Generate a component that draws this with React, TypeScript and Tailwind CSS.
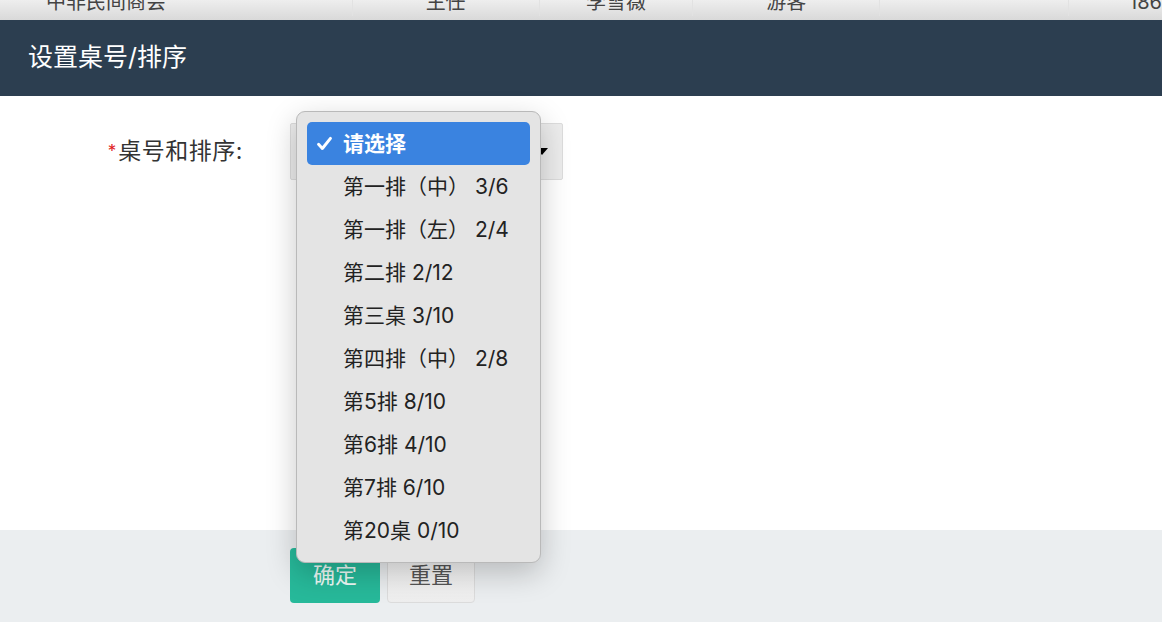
import { useState } from "react";

const options = [
  "请选择",
  "第一排（中） 3/6",
  "第一排（左） 2/4",
  "第二排 2/12",
  "第三桌 3/10",
  "第四排（中） 2/8",
  "第5排 8/10",
  "第6排 4/10",
  "第7排 6/10",
  "第20桌 0/10",
];

function CheckIcon() {
  return (
    <svg className="h-[17px] w-[17px]" viewBox="0 0 16 16" fill="none">
      <path
        d="M2.4 8.8l3.6 3.9L13.6 3.2"
        stroke="currentColor"
        strokeWidth={2.8}
        strokeLinecap="round"
        strokeLinejoin="round"
      />
    </svg>
  );
}

function App() {
  const [selected, setSelected] = useState(0);

  return (
    <div className="flex h-screen w-full flex-col overflow-hidden bg-white font-['Inter','Noto_Sans_CJK_SC',sans-serif]">
      {/* table row behind the dialog */}
      <div className="flex h-[20px] shrink-0 overflow-hidden bg-gradient-to-b from-[#eeeeee] to-[#d9d9d9] text-[20px] text-[#444]">
        <div className="-mt-[12px] h-[28px] w-[352px] pl-[46px] leading-[28px]">中非民间商会</div>
        <div className="-mt-[12px] h-[28px] w-[187px] border-l border-[#e2e2e2] text-center leading-[28px]">主任</div>
        <div className="-mt-[12px] h-[28px] w-[154px] border-l border-[#e2e2e2] text-center leading-[28px]">李雪薇</div>
        <div className="-mt-[12px] h-[28px] w-[187px] border-l border-[#e2e2e2] text-center leading-[28px]">游客</div>
        <div className="-mt-[12px] h-[28px] w-[189px] border-l border-[#e2e2e2] leading-[28px]"></div>
        <div className="-mt-[12px] h-[28px] flex-1 border-l border-[#e2e2e2] pl-[60px] leading-[28px]">186</div>
      </div>

      {/* dialog header */}
      <div className="flex h-[76px] shrink-0 items-center bg-[#2c3e50] pl-[28px] text-[25px] text-white">
        设置桌号/排序
      </div>

      {/* dialog body */}
      <div className="flex-1 pt-[27px]">
        <div className="flex items-center">
          <div className="flex w-[243px] items-start justify-end text-[23px] text-[#333]">
            <span className="mr-[2px] mt-[9px] text-[17px] leading-none text-[#e02020]">*</span>
            <span className="tracking-[0.5px]">桌号和排序:</span>
          </div>
          <div className="relative ml-[47px] flex h-[57px] w-[273px] items-center justify-end rounded-[2px] border border-[#dcdcdc] bg-[#ececec] pr-[14px]">
            <span className="h-0 w-0 border-x-[6px] border-t-[7px] border-x-transparent border-t-black" />

            <div className="absolute -top-[13px] left-[5px] z-10 w-[245px] rounded-[9px] border border-[#b9b9b9] bg-[#e4e4e4] px-[10px] py-[10px] shadow-[0_10px_30px_rgba(0,0,0,0.22)]">
              {options.map((opt, i) => (
                <div
                  key={opt}
                  onClick={() => setSelected(i)}
                  className={
                    i === selected
                      ? "flex h-[43px] items-center rounded-[5px] bg-[#3a83e0] pl-[9px] text-[21px] font-bold text-white"
                      : "flex h-[43px] items-center rounded-[5px] pl-[36px] text-[21px] text-[#222]"
                  }
                >
                  {i === selected && (
                    <span className="mr-[10px] flex">
                      <CheckIcon />
                    </span>
                  )}
                  <span className="whitespace-pre">{opt}</span>
                </div>
              ))}
            </div>
          </div>
        </div>
      </div>

      {/* dialog footer */}
      <div className="flex h-[92px] shrink-0 gap-[7px] bg-[#ebeef0] pl-[290px] pt-[18px]">
        <button className="h-[55px] w-[90px] rounded-[4px] bg-[#27b99a] text-[22px] text-[#eefaf6]">
          确定
        </button>
        <button className="h-[55px] w-[88px] rounded-[4px] border border-[#dcdcdc] bg-gradient-to-b from-[#f7f7f7] to-[#eeeeee] text-[22px] text-[#555]">
          重置
        </button>
      </div>
    </div>
  );
}

export default App;
